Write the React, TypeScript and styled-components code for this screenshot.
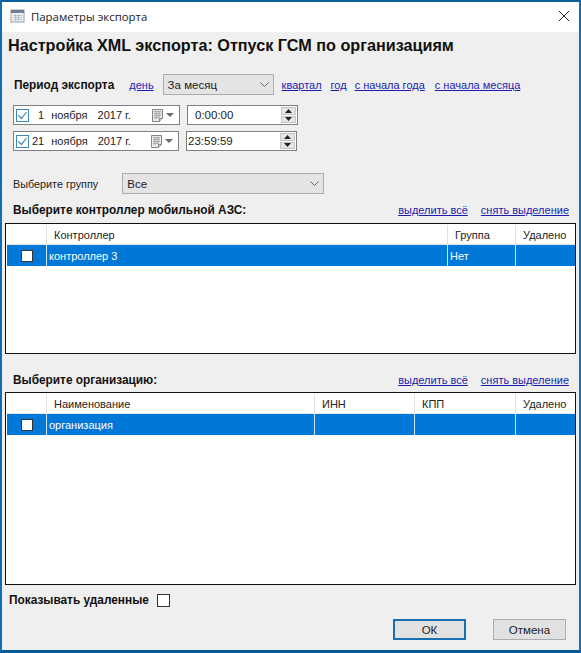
import styled, {createGlobalStyle} from "styled-components";

const GlobalStyle = createGlobalStyle`
  html, body {
    margin: 0;
    padding: 0;
    background: #f0f0f0;
  }
`;

const Window = styled.div`
  box-sizing: border-box;
  width: 581px;
  height: 653px;
  display: flex;
  flex-direction: column;
  overflow: hidden;
  border: 2px solid #0f6fb4;
  border-top-color: #0c5f9c;
  border-bottom: 3px solid #0b5a96;
  background: #efefef;
  color: #111;
  font-family: "Liberation Sans", Arial, sans-serif;
  font-size: 11.5px;
`;

const TitleBar = styled.div`
  flex: none;
  box-sizing: border-box;
  height: 30px;
  display: flex;
  align-items: center;
  padding: 0 9px 2px 8px;
  background: #fff;
`;

const TitleText = styled.div`
  margin-left: 5px;
  flex: 1;
  font-family: "Open Sans", sans-serif;
  font-size: 11.4px;
  color: #222;
`;

const Heading = styled.div`
  flex: none;
  height: 18px;
  line-height: 18px;
  margin: 4px 0 0 6px;
  font-size: 16.2px;
  font-weight: bold;
  white-space: nowrap;
`;

const Row = styled.div<{ $top: number; $left: number; $height: number }>`
  flex: none;
  display: flex;
  align-items: center;
  height: ${p => p.$height}px;
  margin-top: ${p => p.$top}px;
  padding-left: ${p => p.$left}px;
  padding-right: 10px;
  white-space: nowrap;
`;

const BoldLabel = styled.span`
  font-weight: bold;
  font-size: 11.85px;
`;

const Label = styled.span`
  font-size: 10.8px;
  color: #222;
`;

const Link = styled.a<{ $left: number }>`
  margin-left: ${p => p.$left}px;
  color: #1c1cb0;
  text-decoration: underline;
  font-size: 11px;
  cursor: pointer;
`;

const RightLinks = styled.div`
  margin-left: auto;
  display: flex;
`;

const Select = styled.div<{ $left: number; $width: number }>`
  box-sizing: border-box;
  margin-left: ${p => p.$left}px;
  width: ${p => p.$width}px;
  height: 21px;
  display: flex;
  align-items: center;
  justify-content: space-between;
  padding: 0 4px 0 4px;
  border: 1px solid #adadad;
  background: #e4e4e4;
  font-size: 11.5px;
  color: #222;
`;

const DateBox = styled.div<{ $width: number }>`
  box-sizing: border-box;
  width: ${p => p.$width}px;
  height: 20px;
  display: flex;
  align-items: center;
  padding-left: 2px;
  border: 1px solid #7f7f7f;
  background: #fff;
  font-size: 11px;
  color: #222;
`;

const Check = styled.span`
  flex: none;
  box-sizing: border-box;
  width: 13px;
  height: 13px;
  display: flex;
  align-items: center;
  justify-content: center;
  border: 1px solid #3f86b8;
  background: #fff;
`;

const DayText = styled.span<{ $left: number }>`
  margin-left: ${p => p.$left}px;
`;

const MonthText = styled.span`
  margin-left: 7px;
`;

const YearText = styled.span`
  margin-left: 10px;
`;

const CalendarButton = styled.span`
  margin-left: auto;
  display: flex;
  align-items: center;
  margin-right: 3px;
`;

const TimeBox = styled.div<{ $left: number; $pad: number }>`
  box-sizing: border-box;
  margin-left: ${p => p.$left}px;
  width: 111px;
  height: 20px;
  display: flex;
  align-items: center;
  padding-left: ${p => p.$pad}px;
  border: 1px solid #7f7f7f;
  background: #fff;
  font-size: 11.5px;
  color: #222;
`;

const Spinner = styled.span`
  margin-left: auto;
  margin-right: 1px;
  width: 15px;
  height: 16px;
  display: flex;
  flex-direction: column;
  gap: 1px;
`;

const SpinPart = styled.span`
  flex: 1;
  display: flex;
  align-items: center;
  justify-content: center;
  background: #e6e6e6;
  border: 1px solid #c4c4c4;
  box-sizing: border-box;
`;

const TableFrame = styled.div<{ $top: number; $height: number }>`
  flex: none;
  box-sizing: border-box;
  width: 571px;
  height: ${p => p.$height}px;
  margin: ${p => p.$top}px 0 0 3px;
  border: 1px solid #111;
  background: #fff;
  padding-left: 1px;
`;

const GridRow = styled.div<{ $columns: string; $selected?: boolean; $height: number }>`
  display: grid;
  grid-template-columns: ${p => p.$columns};
  height: ${p => p.$height}px;
  background: ${p => (p.$selected ? "#0078d7" : "#fff")};
  color: ${p => (p.$selected ? "#fff" : "#222")};
  ${p => (p.$selected ? "" : "border-bottom: 1px solid #e4e4e4; box-sizing: border-box; padding-top: 1px;")}
`;

const Cell = styled.div<{ $selected?: boolean; $pad: number; $center?: boolean }>`
  display: flex;
  align-items: center;
  justify-content: ${p => (p.$center ? "center" : "flex-start")};
  padding-left: ${p => p.$pad}px;
  border-right: 1px solid ${p => (p.$selected ? "#cfe6f8" : "#e0e0e0")};
  font-size: 11px;
  overflow: hidden;
  white-space: nowrap;

  &:last-child {
    border-right: none;
  }
`;

const RowCheck = styled.span`
  box-sizing: border-box;
  width: 12px;
  height: 12px;
  background: #fff;
  border: 1px solid #333;
`;

const PlainCheck = styled.span`
  box-sizing: border-box;
  margin-left: 8px;
  width: 13px;
  height: 13px;
  background: #fff;
  border: 1px solid #333;
`;

const Footer = styled.div`
  flex: none;
  display: flex;
  justify-content: flex-end;
  gap: 27px;
  margin-top: 12px;
  padding-right: 13px;
`;

const Button = styled.button<{ $primary?: boolean }>`
  box-sizing: border-box;
  width: 73px;
  height: 21px;
  padding: 0;
  border: ${p => (p.$primary ? "2px solid #1a6fb0" : "1px solid #adadad")};
  background: #e1e1e1;
  font-family: "Liberation Sans", Arial, sans-serif;
  font-size: 11.5px;
  color: #222;
`;

const WindowIcon = () => (
    <svg width="16" height="16" viewBox="0 0 16 16">
        <rect x="1" y="2" width="13" height="12" fill="#f4f4f4" stroke="#9a9a9a"/>
        <rect x="1" y="2" width="13" height="3" fill="#6d7f96"/>
        <path d="M3 7.5h9M3 9.5h9M3 11.5h9M5.5 6v7M8.5 6v7" stroke="#b4c2d2"/>
    </svg>
);

const CloseIcon = () => (
    <svg width="12" height="12" viewBox="0 0 12 12">
        <path d="M1 1l10 10M11 1L1 11" stroke="#222" strokeWidth="1"/>
    </svg>
);

const Chevron = () => (
    <svg width="9" height="6" viewBox="0 0 9 6">
        <path d="M0.5 0.5l4 4 4-4" fill="none" stroke="#666" strokeWidth="1"/>
    </svg>
);

const CheckMark = () => (
    <svg width="11" height="11" viewBox="0 0 11 11">
        <path d="M1.5 5.5l3 3 5-6.5" fill="none" stroke="#3f86b8" strokeWidth="1.2"/>
    </svg>
);

const CalendarIcon = () => (
    <svg width="24" height="13" viewBox="0 0 24 13">
        <path d="M0.5 0.5h10v9l-3 3h-7z" fill="#e8e8e8" stroke="#858585"/>
        <path d="M2 2.5h7M2 4.5h7M2 6.5h7M2 8.5h5M4 2v8M7 2v7" stroke="#9c9c9c" strokeWidth="0.8"/>
        <path d="M7.5 12.5v-3h3" fill="#cfcfcf" stroke="#858585"/>
        <path d="M14 4h8l-4 4z" fill="#6a6a6a"/>
    </svg>
);

const Arrow = ({down}: { down?: boolean }) => (
    <svg width="7" height="4" viewBox="0 0 7 4">
        <path d={down ? "M0 0h7L3.5 4z" : "M3.5 0L7 4H0z"} fill="#222"/>
    </svg>
);

const DatePicker = ({day, dayLeft, width}: { day: string; dayLeft: number; width: number }) => (
    <DateBox $width={width}>
        <Check><CheckMark/></Check>
        <DayText $left={dayLeft}>{day}</DayText>
        <MonthText>ноября</MonthText>
        <YearText>2017 г.</YearText>
        <CalendarButton><CalendarIcon/></CalendarButton>
    </DateBox>
);

const TimeInput = ({value, left, pad}: { value: string; left: number; pad: number }) => (
    <TimeBox $left={left} $pad={pad}>
        {value}
        <Spinner>
            <SpinPart><Arrow/></SpinPart>
            <SpinPart><Arrow down/></SpinPart>
        </Spinner>
    </TimeBox>
);

const SectionHeader = ({title, top}: { title: string; top: number }) => (
    <Row $top={top} $left={11} $height={16}>
        <BoldLabel>{title}</BoldLabel>
        <RightLinks>
            <Link $left={0}>выделить всё</Link>
            <Link $left={13}>снять выделение</Link>
        </RightLinks>
    </Row>
);

interface GridTableProps {
    top: number;
    height: number;
    columns: string;
    headers: string[];
    cells: string[];
}

const GridTable = ({top, height, columns, headers, cells}: GridTableProps) => (
    <TableFrame $top={top} $height={height}>
        <GridRow $columns={columns} $height={21}>
            <Cell $pad={0}/>
            {headers.map((header, i) => (
                <Cell key={i} $pad={7}>{header}</Cell>
            ))}
        </GridRow>
        <GridRow $columns={columns} $height={21} $selected>
            <Cell $selected $pad={0} $center><RowCheck/></Cell>
            {cells.map((cell, i) => (
                <Cell key={i} $selected $pad={2}>{cell}</Cell>
            ))}
        </GridRow>
    </TableFrame>
);

export default function App() {
    return (
        <>
            <GlobalStyle/>
            <Window>
                <TitleBar>
                    <WindowIcon/>
                    <TitleText>Параметры экспорта</TitleText>
                    <CloseIcon/>
                </TitleBar>

                <Heading>Настройка XML экспорта: Отпуск ГСМ по организациям</Heading>

                <Row $top={20} $left={12} $height={21}>
                    <BoldLabel>Период экспорта</BoldLabel>
                    <Link $left={15}>день</Link>
                    <Select $left={9} $width={111}>За месяц<Chevron/></Select>
                    <Link $left={8}>квартал</Link>
                    <Link $left={9}>год</Link>
                    <Link $left={8}>с начала года</Link>
                    <Link $left={10}>с начала месяца</Link>
                </Row>

                <Row $top={10} $left={11} $height={20}>
                    <DatePicker day="1" dayLeft={9} width={167}/>
                    <TimeInput value="0:00:00" left={7} pad={7}/>
                </Row>
                <Row $top={6} $left={11} $height={20}>
                    <DatePicker day="21" dayLeft={3} width={166}/>
                    <TimeInput value="23:59:59" left={7} pad={1}/>
                </Row>

                <Row $top={22} $left={11} $height={21}>
                    <Label>Выберите группу</Label>
                    <Select $left={24} $width={202}>Все<Chevron/></Select>
                </Row>

                <SectionHeader title="Выберите контроллер мобильной АЗС:" top={8}/>
                <GridTable
                    top={5}
                    height={131}
                    columns="40px 401px 68px 1fr"
                    headers={["Контроллер", "Группа", "Удалено"]}
                    cells={["контроллер 3", "Нет", ""]}
                />

                <SectionHeader title="Выберите организацию:" top={18}/>
                <GridTable
                    top={4}
                    height={193}
                    columns="40px 268px 100px 101px 1fr"
                    headers={["Наименование", "ИНН", "КПП", "Удалено"]}
                    cells={["организация", "", "", ""]}
                />

                <Row $top={8} $left={7} $height={14}>
                    <BoldLabel>Показывать удаленные</BoldLabel>
                    <PlainCheck/>
                </Row>

                <Footer>
                    <Button $primary>ОК</Button>
                    <Button>Отмена</Button>
                </Footer>
            </Window>
        </>
    );
}
